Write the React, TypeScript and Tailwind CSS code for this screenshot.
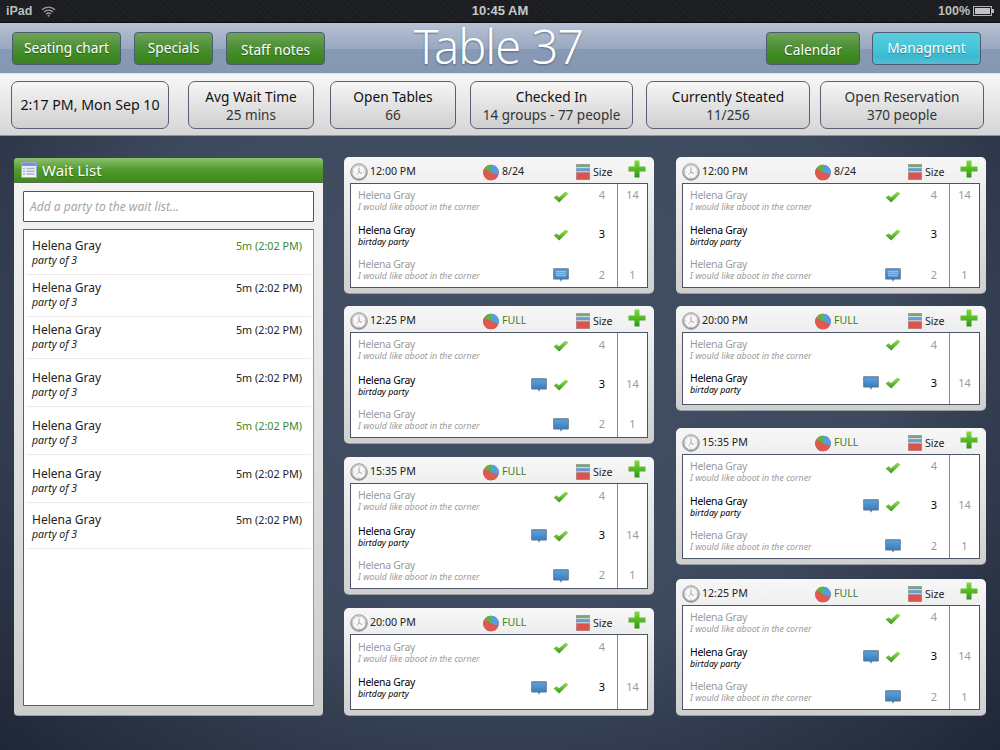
import React from "react";

const font = "font-['Noto_Sans','Open_Sans',sans-serif]";

function Clock() {
  return (
    <svg width="18" height="18" viewBox="0 0 18 18" className="shrink-0">
      <defs>
        <linearGradient id="clockRim" x1="0" y1="0" x2="0" y2="1">
          <stop offset="0" stopColor="#e2e2e2" />
          <stop offset="1" stopColor="#9a9a9a" />
        </linearGradient>
      </defs>
      <circle cx="9" cy="9" r="8.3" fill="url(#clockRim)" stroke="#7a7a7a" strokeWidth="0.7" />
      <circle cx="9" cy="9" r="6.6" fill="#f8f8f8" stroke="#b5b5b5" strokeWidth="0.5" />
      <path d="M9 3.5v1M9 13.5v1M3.5 9h1M13.5 9h1" stroke="#aaa" strokeWidth="0.7" />
      <path d="M9 9L9 4.8M9 9l3 1.6" stroke="#8a8a9a" strokeWidth="0.8" fill="none" />
      <path d="M9 9L6.4 12" stroke="#d98585" strokeWidth="0.7" />
    </svg>
  );
}

function Pie() {
  return (
    <svg width="16" height="17" viewBox="0 0 16 17" className="shrink-0">
      <circle cx="8" cy="8.5" r="7.8" fill="#d9534c" />
      <path d="M8 8.5L1.2 4.6A7.8 7.8 0 0 1 8 .7Z" fill="#5fb246" />
      <path d="M8 8.5V.7A7.8 7.8 0 0 1 15.4 11Z" fill="#4f9fe3" />
      <path d="M8 8.5L1.2 4.6A7.8 7.8 0 0 0 8 16.3 7.8 7.8 0 0 0 15.4 11Z" fill="#dc5a50" />
    </svg>
  );
}

function SizeIcon() {
  return (
    <svg width="14" height="16" viewBox="0 0 14 16" className="shrink-0">
      <rect width="14" height="16" fill="#a8a8a8" />
      <rect x="0.5" y="0.5" width="13" height="2.5" fill="#7da27d" />
      <rect x="0.5" y="3" width="13" height="1.3" fill="#d8d8d8" />
      <rect x="0.5" y="4.3" width="13" height="3" fill="#5f9fd8" />
      <rect x="0.5" y="7.3" width="13" height="1.2" fill="#d8d8d8" />
      <rect x="0.5" y="8.5" width="13" height="7" fill="#d9534f" />
    </svg>
  );
}

function Plus() {
  return (
    <svg width="18" height="18" viewBox="0 0 18 18" className="shrink-0 -mt-[7px]">
      <defs>
        <linearGradient id="plusG" x1="0" y1="0" x2="0" y2="1">
          <stop offset="0" stopColor="#7fdc3a" />
          <stop offset="1" stopColor="#2f9414" />
        </linearGradient>
      </defs>
      <path d="M6.5 0.5h5v6h6v5h-6v6h-5v-6h-6v-5h6z" fill="url(#plusG)" />
    </svg>
  );
}

function Check() {
  return (
    <svg width="16" height="12" viewBox="0 0 16 12">
      <defs>
        <linearGradient id="checkG" x1="0" y1="0" x2="0" y2="1">
          <stop offset="0" stopColor="#9be055" />
          <stop offset="1" stopColor="#369618" />
        </linearGradient>
      </defs>
      <path d="M0.6 6.4L3.6 4.2 6 6.2 12.4 0.6 15.4 2.6 6.2 11.6Z" fill="url(#checkG)" />
    </svg>
  );
}

function Comment({ lines }: { lines?: boolean }) {
  return (
    <svg width="16" height="14" viewBox="0 0 16 14">
      <defs>
        <linearGradient id="cmtG" x1="0" y1="0" x2="0" y2="1">
          <stop offset="0" stopColor="#5aa2dc" />
          <stop offset="1" stopColor="#3a7fc0" />
        </linearGradient>
      </defs>
      <path d="M1 0.2h14a.8.8 0 0 1 .8.8v9.8a.8.8 0 0 1-.8.8H9.2L8 13.8 7 11.6H1a.8.8 0 0 1-.8-.8V1A.8.8 0 0 1 1 .2Z" fill="#5f738a" />
      <rect x="1.2" y="1.4" width="13.6" height="9.2" fill="url(#cmtG)" />
      {lines && <path d="M3 3.8h10M3 5.8h10M3 7.8h10" stroke="#c2dcf2" strokeWidth="0.8" />}
    </svg>
  );
}

function Wifi() {
  return (
    <svg width="15" height="11" viewBox="0 0 15 11">
      <path d="M1 3.8a9.2 9.2 0 0 1 13 0M3 6a6.3 6.3 0 0 1 9 0M5 8.1a3.4 3.4 0 0 1 5 0" fill="none" stroke="#9c9c9c" strokeWidth="1.3" />
      <circle cx="7.5" cy="9.8" r="1" fill="#9c9c9c" />
    </svg>
  );
}

function Battery() {
  return (
    <svg width="21" height="10" viewBox="0 0 21 10">
      <rect x="0.5" y="0.5" width="18" height="9" fill="none" stroke="#b5b5b5" />
      <rect x="2" y="2" width="15" height="6" fill="#c4c4c4" />
      <rect x="19" y="3" width="2" height="4" fill="#b5b5b5" />
    </svg>
  );
}

function ListIcon() {
  return (
    <svg width="16" height="16" viewBox="0 0 16 16" className="shrink-0">
      <rect x="0.5" y="0.5" width="15" height="15" fill="#eef1f8" stroke="#9aa8cf" />
      <rect x="1" y="1" width="14" height="3" fill="#7d8fd0" />
      <path d="M2 6.5h2M2 9.3h2M2 12.1h2M5.5 6.5h8M5.5 9.3h8M5.5 12.1h8" stroke="#a6b0d4" strokeWidth="1.5" />
    </svg>
  );
}

function GlossButton({ label, w, cyan, shift }: { label: string; w: string; cyan?: boolean; shift?: boolean }) {
  return (
    <div
      className={`${w} h-[33px] shrink-0 rounded-[4px] border border-[#4a5d70] flex justify-center text-[13.7px] leading-none text-white [text-shadow:0_1px_1px_rgba(0,0,0,.35)] ${shift ? "pt-[10px]" : "pt-[8px]"} ${
        cyan
          ? "bg-[linear-gradient(#58cfe0,#44c3d8_55%,#3ab9d0_75%,#57bdd0)]"
          : "bg-[linear-gradient(#6fa556,#4f8f38_45%,#3c8a1c_75%,#3f7d2a)]"
      }`}
    >
      {label}
    </div>
  );
}

function Stat({ title, sub, w, single, light }: { title: string; sub?: string; w: string; single?: boolean; light?: boolean }) {
  return (
    <div className={`${w} h-[48px] shrink-0 rounded-[7px] border border-[#566174] bg-[linear-gradient(#f6f6f6,#cfcfcf)] flex flex-col items-center justify-center text-center ${single ? "" : "pt-[2px]"}`}>
      <div className={`${single ? "text-[14.2px]" : "text-[13.7px]"} leading-[19px] ${light ? "text-[#333]" : "text-[#111]"}`}>{title}</div>
      {!single && <div className="text-[13.5px] leading-[19px] text-[#333]">{sub}</div>}
    </div>
  );
}

type Row = { active?: boolean; check?: boolean; comment?: boolean; lines?: boolean; size: number; extra?: number };

const textPad3 = ["pb-[1px]", "", ""];
const iconPad3 = ["pb-[8px]", "", "pt-[10px]"];
const numPad3 = ["pb-[11px]", "pb-[2px]", "pt-[10px]"];
const textPad2 = ["pb-[3px]", "pb-[6px]"];
const iconPad2 = ["pb-[12px]", "pb-[6px]"];
const numPad2 = ["pb-[12px]", "pb-[7px]"];

function CardRow({ active, check, comment, lines, size, extra, idx, count }: Row & { idx: number; count: number }) {
  const textPad = count === 2 ? textPad2[idx] : textPad3[idx];
  const iconPad = count === 2 ? iconPad2[idx] : iconPad3[idx];
  const numPad = count === 2 ? numPad2[idx] : numPad3[idx];
  return (
    <div className="flex flex-1">
      <div className={`flex-1 pl-[7px] flex flex-col justify-center ${textPad}`}>
        <div className={`text-[10.4px] tracking-[-0.25px] leading-[14px] ${active ? "text-black" : "text-[#9a9a9a]"}`}>Helena Gray</div>
        <div className={`text-[8.8px] leading-[11px] italic ${active ? "text-black" : "text-[#9a9a9a]"}`}>
          {active ? "birtday party" : "I would like aboot in the corner"}
        </div>
      </div>
      <div className={`flex items-center justify-end gap-[6px] ${iconPad}`}>
        {comment && <Comment lines={lines} />}
        {check && <Check />}
      </div>
      <div className={`w-[48px] flex items-center justify-end pr-[12px] text-[11px] ${numPad} ${active ? "text-black" : "text-[#9a9a9a]"}`}>{size}</div>
      <div className={`w-[30px] border-l border-[#7f8896] flex items-center justify-center text-[11px] text-[#9a9a9a] ${numPad}`}>{extra}</div>
    </div>
  );
}

function Card({ time, status, rows, h, mb }: { time: string; status: string; rows: Row[]; h: string; mb: string }) {
  const full = status === "FULL";
  return (
    <div className={`${h} ${mb} w-[310px] shrink-0 rounded-[5px] bg-[linear-gradient(#f7f7f7,#cfcfcf)] border-b border-[#9a9da3] flex flex-col px-[6px] pb-[5px]`}>
      <div className="h-[26px] shrink-0 flex items-center pt-[4px] text-[10.6px] text-[#222]">
        <div className="w-[133px] flex items-center gap-[2px]">
          <Clock />
          <span>{time}</span>
        </div>
        <div className="w-[93px] flex items-center gap-[3px]">
          <Pie />
          <span className={full ? "text-[#3f7f25]" : "text-[#222]"}>{status}</span>
        </div>
        <div className="w-[52px] flex items-center gap-[3px]">
          <SizeIcon />
          <span className="pt-[1px]">Size</span>
        </div>
        <Plus />
      </div>
      <div className="flex-1 flex flex-col bg-white border border-[#4a5568]">
        {rows.map((r, i) => (
          <CardRow key={i} idx={i} count={rows.length} {...r} />
        ))}
      </div>
    </div>
  );
}

const three: Row[] = [
  { check: true, size: 4, extra: 14 },
  { active: true, check: true, size: 3 },
  { comment: true, lines: true, size: 2, extra: 1 },
];
const threeB: Row[] = [
  { check: true, size: 4 },
  { active: true, check: true, comment: true, size: 3, extra: 14 },
  { comment: true, size: 2, extra: 1 },
];
const two: Row[] = [
  { check: true, size: 4 },
  { active: true, check: true, comment: true, size: 3, extra: 14 },
];

const waits = [
  { h: "h-[45px]", pt: "pt-[8px]", green: true },
  { h: "h-[42px]", pt: "pt-[5px]" },
  { h: "h-[42px]", pt: "pt-[5px]" },
  { h: "h-[48px]", pt: "pt-[11px]" },
  { h: "h-[48px]", pt: "pt-[11px]", green: true },
  { h: "h-[48px]", pt: "pt-[11px]" },
  { h: "h-[46px]", pt: "pt-[9px]" },
];

export default function App() {
  return (
    <div className={`${font} w-[1000px] h-[750px] overflow-hidden flex flex-col bg-[radial-gradient(ellipse_at_50%_45%,#434f64_0%,#3d495d_55%,#1f2636_100%)]`}>
      <div className="h-[23px] shrink-0 bg-[repeating-linear-gradient(45deg,#1c1d20_0px,#1c1d20_2px,#232427_3px,#18191c_4px)] border-b border-[#0c0d10] flex items-center px-[6px] font-['Liberation_Sans',sans-serif] font-bold text-[12.5px] text-[#bdbdbd]">
        <div className="flex-1 flex items-center gap-[9px]">
          <span>iPad</span>
          <Wifi />
        </div>
        <div className="text-[13px] text-[#c8c8c8]">10:45 AM</div>
        <div className="flex-1 flex items-center justify-end gap-[3px]">
          <span>100%</span>
          <Battery />
        </div>
      </div>

      <div className="h-[51px] shrink-0 flex items-center px-[12px] bg-[linear-gradient(#b7c2d3,#98a8c0_52%,#8799b4_52%,#8598b2)] border-b border-[#dfe4ea]">
        <div className="flex-1 flex items-center gap-[13px]">
          <GlossButton label="Seating chart" w="w-[109px]" />
          <GlossButton label="Specials" w="w-[79px]" />
          <GlossButton label="Staff notes" w="w-[99px]" shift />
        </div>
        <div className="text-[47px] tracking-[-1px] leading-none font-light text-white [text-shadow:0_1px_2px_rgba(40,50,70,.5)] pb-[3px] pl-[4px]">Table 37</div>
        <div className="flex-1 flex items-center justify-end gap-[12px] pr-[7px]">
          <GlossButton label="Calendar" w="w-[94px]" shift />
          <GlossButton label="Managment" w="w-[109px]" cyan />
        </div>
      </div>

      <div className="h-[62px] shrink-0 flex items-center bg-[linear-gradient(#f7f7f7,#d6d6d6)] border-b border-[#8f959e] pl-[11px] text-[#222]">
        <Stat title="2:17 PM, Mon Sep 10" w="w-[158px]" single />
        <div className="w-[19px]" />
        <Stat title="Avg Wait Time" sub="25 mins" w="w-[126px]" />
        <div className="w-[16px]" />
        <Stat title="Open Tables" sub="66" w="w-[126px]" />
        <div className="w-[14px]" />
        <Stat title="Checked In" sub="14 groups - 77 people" w="w-[163px]" />
        <div className="w-[13px]" />
        <Stat title="Currently Steated" sub="11/256" w="w-[164px]" />
        <div className="w-[10px]" />
        <Stat title="Open Reservation" sub="370 people" w="w-[164px]" light />
      </div>

      <div className="flex-1 flex pl-[14px] pt-[21px]">
        <div className="w-[309px] h-[558px] mt-[1px] shrink-0 rounded-[4px] bg-[linear-gradient(#f4f4f4,#cdcdcc)] border-b border-[#9a9da3] flex flex-col">
          <div className="h-[25px] shrink-0 rounded-t-[4px] bg-[linear-gradient(#8cc070,#4f9a2a_50%,#3f8a1a)] border-b border-[#5a6b50] flex items-center pl-[7px] gap-[5px] text-[15px] text-white [text-shadow:0_1px_1px_rgba(0,0,0,.3)]">
            <ListIcon />
            <span>Wait List</span>
          </div>
          <div className="mx-[9px] mt-[8px] h-[31px] shrink-0 bg-white border border-[#4a5568] rounded-[1px] flex items-center pl-[6px] text-[12px] italic text-[#a5a5a5]">
            Add a party to the wait list...
          </div>
          <div className="mx-[9px] mt-[7px] mb-[9px] flex-1 bg-white border border-[#56606f] border-r-[#9098a8] rounded-[1px] flex flex-col px-[1px]">
            {waits.map((w, i) => (
              <div key={i} className={`${w.h} ${w.pt} shrink-0 mx-[1px] border-b border-[#ececec] flex justify-between pl-[6px] pr-[9px]`}>
                <div>
                  <div className="text-[12px] leading-[16px] text-[#222]">Helena Gray</div>
                  <div className="text-[10.5px] leading-[13px] italic text-[#222]">party of 3</div>
                </div>
                <div className={`text-[10.8px] leading-[16px] ${w.green ? "text-[#3d8a2a]" : "text-[#222]"}`}>5m (2:02 PM)</div>
              </div>
            ))}
          </div>
        </div>

        <div className="w-[21px] shrink-0" />
        <div className="flex flex-col">
          <Card time="12:00 PM" status="8/24" rows={three} h="h-[137px]" mb="mb-[12px]" />
          <Card time="12:25 PM" status="FULL" rows={threeB} h="h-[138px]" mb="mb-[13px]" />
          <Card time="15:35 PM" status="FULL" rows={threeB} h="h-[138px]" mb="mb-[13px]" />
          <Card time="20:00 PM" status="FULL" rows={two} h="h-[108px]" mb="mb-0" />
        </div>
        <div className="w-[22px] shrink-0" />
        <div className="flex flex-col">
          <Card time="12:00 PM" status="8/24" rows={three} h="h-[137px]" mb="mb-[12px]" />
          <Card time="20:00 PM" status="FULL" rows={two} h="h-[105px]" mb="mb-[17px]" />
          <Card time="15:35 PM" status="FULL" rows={threeB} h="h-[137px]" mb="mb-[14px]" />
          <Card time="12:25 PM" status="FULL" rows={threeB} h="h-[137px]" mb="mb-0" />
        </div>
      </div>
    </div>
  );
}
